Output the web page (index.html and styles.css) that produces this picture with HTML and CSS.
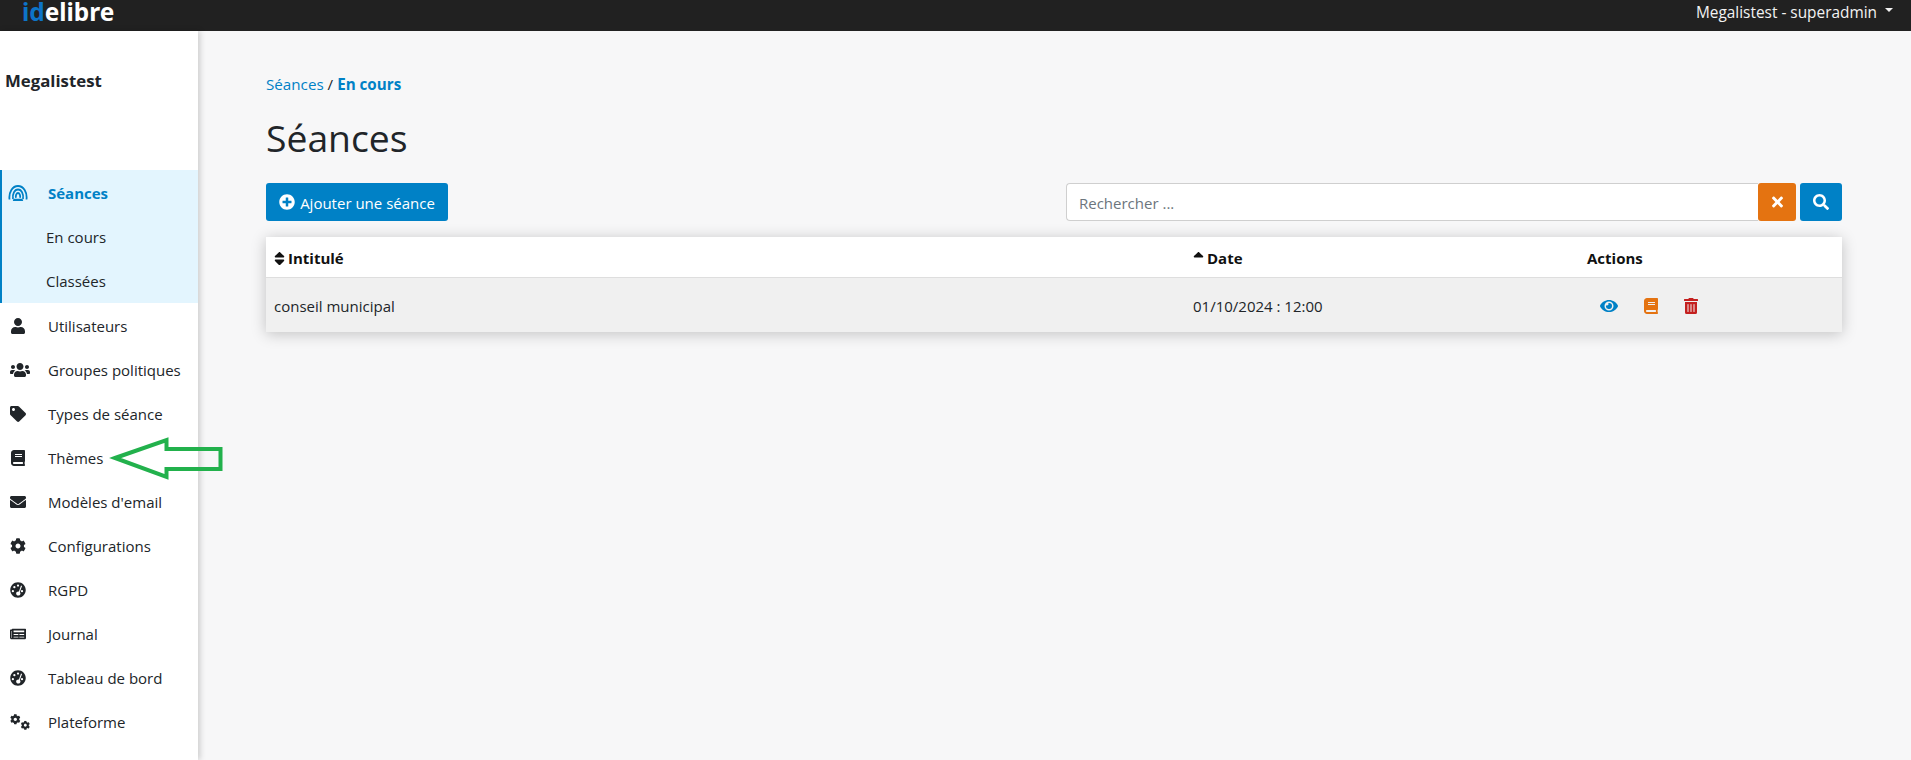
FILE: index.html
```html
<!DOCTYPE html>
<html lang="fr">
<head>
<meta charset="utf-8">
<title>Séances</title>
<link rel="stylesheet" href="styles.css">
</head>
<body>
<svg class="defs" width="0" height="0" aria-hidden="true">
  <symbol id="i-cog" viewBox="0 0 512 512"><path d="M487.4 315.7l-42.6-24.6c4.3-23.2 4.3-47 0-70.2l42.6-24.6c4.9-2.8 7.1-8.6 5.5-14-11.1-35.6-30-67.8-54.7-94.6-3.8-4.1-10-5.1-14.8-2.3L380.8 110c-17.9-15.4-38.5-27.3-60.8-35.1V25.8c0-5.6-3.9-10.5-9.4-11.7-36.7-8.2-74.3-7.8-109.2 0-5.5 1.2-9.4 6.1-9.4 11.7V75c-22.2 7.9-42.8 19.8-60.8 35.1L88.7 85.5c-4.9-2.8-11-1.9-14.8 2.3-24.7 26.7-43.6 58.9-54.7 94.6-1.7 5.4.6 11.2 5.5 14L67.3 221c-4.3 23.2-4.3 47 0 70.2l-42.6 24.6c-4.9 2.8-7.1 8.6-5.5 14 11.1 35.6 30 67.8 54.7 94.6 3.8 4.1 10 5.1 14.8 2.3l42.6-24.6c17.9 15.4 38.5 27.3 60.8 35.1v49.2c0 5.6 3.9 10.5 9.4 11.7 36.7 8.2 74.3 7.8 109.2 0 5.5-1.2 9.4-6.1 9.4-11.7v-49.2c22.2-7.9 42.8-19.8 60.8-35.1l42.6 24.6c4.9 2.8 11 1.9 14.8-2.3 24.7-26.7 43.6-58.9 54.7-94.6 1.5-5.5-.7-11.3-5.6-14.1zM256 336c-44.1 0-80-35.9-80-80s35.9-80 80-80 80 35.9 80 80-35.9 80-80 80z"/></symbol>
  <symbol id="i-gauge" viewBox="0 0 512 512"><path fill-rule="evenodd" d="M256 8C119 8 8 119 8 256s111 248 248 248 248-111 248-248S393 8 256 8zM256 76a36 36 0 1 1 0 72 36 36 0 0 1 0-72zM140 130a36 36 0 1 1 0 72 36 36 0 0 1 0-72zM92 256a36 36 0 1 1 0 72 36 36 0 0 1 0-72zM384 256a36 36 0 1 1 0 72 36 36 0 0 1 0-72zM352 112l34 12-72 196c14 12 22 28 22 46 0 36-32 66-70 66s-70-30-70-66 32-66 70-66c8 0 14 1 20 3z"/></symbol>
</svg>

<header class="topbar">
  <div class="logo"><span class="logo-id">id</span>elibre</div>
  <div class="user">Megalistest - superadmin<span class="caret"></span></div>
</header>

<div class="shell">
  <aside class="sidebar">
    <div class="structure">Megalistest</div>
    <nav class="menu">
      <div class="group">
        <a class="item item-active">
          <svg class="ico ico-podcast" viewBox="0 0 20 16"><g fill="none" stroke="currentColor" stroke-width="1.800"><path d="M1.500 14.500C.6 7 4.500 1 10 1s9.400 6 8.500 13.500"/><path d="M5 14C4.200 9 6.500 4.500 10 4.500s5.800 4.500 5 9.500"/><path d="M8 12.800C7.300 10.500 8.500 8 10 8s2.700 2.500 2 4.800"/></g><path d="M5.500 13.800h9l.7 2.200H4.800z" fill="currentColor"/></svg>
          <span>Séances</span>
        </a>
        <a class="item sub">En cours</a>
        <a class="item sub">Classées</a>
      </div>
      <a class="item"><svg class="ico" viewBox="0 0 448 512"><path d="M224 256c70.7 0 128-57.3 128-128S294.7 0 224 0 96 57.3 96 128s57.3 128 128 128zm89.6 32h-16.7c-22.2 10.2-46.9 16-72.9 16s-50.6-5.8-72.9-16h-16.7C60.2 288 0 348.2 0 422.4V464c0 26.5 21.5 48 48 48h352c26.5 0 48-21.5 48-48v-41.6c0-74.2-60.2-134.4-134.4-134.4z"/></svg><span>Utilisateurs</span></a>
      <a class="item"><svg class="ico ico-wide" viewBox="0 0 640 512"><path d="M96 224c35.3 0 64-28.7 64-64s-28.7-64-64-64-64 28.7-64 64 28.7 64 64 64zm448 0c35.3 0 64-28.7 64-64s-28.700-64-64-64-64 28.7-64 64 28.7 64 64 64zm32 32h-64c-17.6 0-33.5 7.1-45.1 18.6 40.3 22.1 68.9 62 75.1 109.4h66c17.7 0 32-14.3 32-32v-32c0-35.3-28.7-64-64-64zm-256 0c61.9 0 112-50.1 112-112S381.9 32 320 32 208 82.1 208 144s50.1 112 112 112zm76.8 32h-8.3c-20.8 10-43.9 16-68.5 16s-47.6-6-68.5-16h-8.3C179.600 288 128 339.6 128 403.2V432c0 26.5 21.5 48 48 48h288c26.5 0 48-21.5 48-48v-28.8c0-63.6-51.6-115.2-115.2-115.2zm-223.7-13.4C161.5 263.1 145.6 256 128 256H64c-35.3 0-64 28.7-64 64v32c0 17.7 14.3 32 32 32h65.9c6.3-47.4 34.9-87.3 75.2-109.4z"/></svg><span>Groupes politiques</span></a>
      <a class="item"><svg class="ico" viewBox="0 0 512 512"><path d="M0 252.118V48C0 21.49 21.49 0 48 0h204.118a48 48 0 0 1 33.941 14.059l211.882 211.882c18.745 18.745 18.745 49.137 0 67.882L293.823 497.941c-18.745 18.745-49.137 18.745-67.882 0L14.059 286.059A48 48 0 0 1 0 252.118zM112 64c-26.51 0-48 21.49-48 48s21.49 48 48 48 48-21.49 48-48-21.49-48-48-48z"/></svg><span>Types de séance</span></a>
      <a class="item"><svg class="ico" viewBox="0 0 448 512"><path d="M448 360V24c0-13.3-10.7-24-24-24H96C43 0 0 43 0 96v320c0 53 43 96 96 96h328c13.3 0 24-10.7 24-24v-16c0-7.5-3.5-14.3-8.9-18.7-4.2-15.4-4.2-59.3 0-74.7 5.4-4.3 8.9-11.1 8.9-18.6zM128 134c0-3.3 2.7-6 6-6h212c3.3 0 6 2.7 6 6v20c0 3.3-2.7 6-6 6H134c-3.3 0-6-2.7-6-6v-20zm0 64c0-3.3 2.7-6 6-6h212c3.3 0 6 2.7 6 6v20c0 3.3-2.7 6-6 6H134c-3.3 0-6-2.7-6-6v-20zm253.4 250H96c-17.7 0-32-14.3-32-32 0-17.6 14.4-32 32-32h285.4c-1.9 17.1-1.9 46.9 0 64z"/></svg><span>Thèmes</span></a>
      <a class="item"><svg class="ico" viewBox="0 0 512 512"><path d="M502.3 190.8c3.9-3.1 9.7-.2 9.7 4.7V400c0 26.5-21.5 48-48 48H48c-26.5 0-48-21.5-48-48V195.6c0-5 5.7-7.8 9.7-4.7 22.4 17.4 52.1 39.5 154.1 113.6 21.1 15.4 56.7 47.8 92.2 47.6 35.7.3 72-32.8 92.3-47.6 102-74.1 131.6-96.3 154-113.7zM256 320c23.2.4 56.6-29.2 73.4-41.4 132.7-96.3 142.8-104.7 173.4-128.7 5.8-4.5 9.2-11.5 9.2-18.9v-19c0-26.5-21.5-48-48-48H48C21.5 64 0 85.5 0 112v19c0 7.4 3.4 14.3 9.2 18.9 30.6 23.9 40.7 32.4 173.4 128.7 16.8 12.2 50.2 41.8 73.4 41.4z"/></svg><span>Modèles d'email</span></a>
      <a class="item"><svg class="ico"><use href="#i-cog"/></svg><span>Configurations</span></a>
      <a class="item"><svg class="ico"><use href="#i-gauge"/></svg><span>RGPD</span></a>
      <a class="item"><svg class="ico" viewBox="0 0 576 512"><path d="M552 64H88c-13.255 0-24 10.745-24 24v8H24c-13.255 0-24 10.745-24 24v272c0 30.928 25.072 56 56 56h472c26.51 0 48-21.49 48-48V88c0-13.255-10.745-24-24-24zM56 400a8 8 0 0 1-8-8V144h16v248a8 8 0 0 1-8 8zm236-16H140c-6.627 0-12-5.373-12-12v-8c0-6.627 5.373-12 12-12h152c6.627 0 12 5.373 12 12v8c0 6.627-5.373 12-12 12zm208 0H348c-6.627 0-12-5.373-12-12v-8c0-6.627 5.373-12 12-12h152c6.627 0 12 5.373 12 12v8c0 6.627-5.373 12-12 12zm-208-96H140c-6.627 0-12-5.373-12-12v-8c0-6.627 5.373-12 12-12h152c6.627 0 12 5.373 12 12v8c0 6.627-5.373 12-12 12zm208 0H348c-6.627 0-12-5.373-12-12v-8c0-6.627 5.373-12 12-12h152c6.627 0 12 5.373 12 12v8c0 6.627-5.373 12-12 12zm0-96H140c-6.627 0-12-5.373-12-12v-40c0-6.627 5.373-12 12-12h360c6.627 0 12 5.373 12 12v40c0 6.627-5.373 12-12 12z"/></svg><span>Journal</span></a>
      <a class="item"><svg class="ico"><use href="#i-gauge"/></svg><span>Tableau de bord</span></a>
      <a class="item"><svg class="ico ico-wide" viewBox="0 0 640 512"><use href="#i-cog" x="0" y="0" width="340" height="340"/><use href="#i-cog" x="340" y="212" width="300" height="300"/></svg><span>Plateforme</span></a>
    </nav>
    <svg class="arrow" viewBox="0 0 118 50"><path d="M7 25 58.500 7v9h54v20h-54v8z" fill="none" stroke="#22b14c" stroke-width="4"/></svg>
  </aside>

  <main class="content">
    <div class="crumbs"><a class="crumb-link">Séances</a> / <strong class="crumb-current">En cours</strong></div>
    <h1 class="title">Séances</h1>
    <div class="toolbar">
      <button class="btn btn-add"><svg class="btn-ico" viewBox="0 0 512 512"><path d="M256 8C119 8 8 119 8 256s111 248 248 248 248-111 248-248S393 8 256 8zm144 276c0 6.6-5.4 12-12 12h-92v92c0 6.6-5.4 12-12 12h-56c-6.6 0-12-5.400-12-12v-92h-92c-6.6 0-12-5.4-12-12v-56c0-6.6 5.4-12 12-12h92v-92c0-6.6 5.4-12 12-12h56c6.6 0 12 5.4 12 12v92h92c6.6 0 12 5.4 12 12v56z"/></svg><span class="btn-label">Ajouter une séance</span></button>
      <div class="search">
        <input class="search-input" type="text" placeholder="Rechercher ...">
        <button class="btn btn-clear" aria-label="Effacer"><svg class="x-ico" viewBox="0 0 352 512"><path d="M242.72 256l100.07-100.07c12.28-12.28 12.28-32.19 0-44.48l-22.24-22.24c-12.28-12.28-32.19-12.28-44.48 0L176 189.28 75.93 89.21c-12.28-12.28-32.19-12.28-44.48 0L9.21 111.45c-12.28 12.28-12.28 32.19 0 44.48L109.28 256 9.21 356.07c-12.28 12.28-12.28 32.19 0 44.48l22.24 22.24c12.28 12.28 32.2 12.28 44.48 0L176 322.72l100.07 100.07c12.28 12.28 32.2 12.28 44.48 0l22.24-22.24c12.28-12.28 12.28-32.19 0-44.48L242.72 256z"/></svg></button>
        <button class="btn btn-search" aria-label="Rechercher"><svg class="s-ico" viewBox="0 0 512 512"><path d="M505 442.7L405.3 343c-4.5-4.5-10.6-7-17-7H372c27.6-35.3 44-79.7 44-128C416 93.1 322.9 0 208 0S0 93.1 0 208s93.1 208 208 208c48.3 0 92.7-16.4 128-44v16.3c0 6.4 2.5 12.5 7 17l99.7 99.7c9.4 9.4 24.6 9.4 33.9 0l28.3-28.3c9.4-9.4 9.4-24.6.1-34zM208 336c-70.7 0-128-57.2-128-128 0-70.7 57.2-128 128-128 70.7 0 128 57.2 128 128 0 70.7-57.2 128-128 128z"/></svg></button>
      </div>
    </div>
    <div class="table">
      <div class="row head">
        <div class="c1"><svg class="sort" viewBox="0 0 320 512"><path d="M41 288h238c21.4 0 32.1 25.9 17 41L177 448c-9.4 9.4-24.6 9.4-33.9 0L24 329c-15.1-15.1-4.4-41 17-41zm255-105L177 64c-9.4-9.4-24.6-9.4-33.9 0L24 183c-15.1 15.1-4.4 41 17 41h238c21.4 0 32.1-25.9 17-41z"/></svg>Intitulé</div>
        <div class="c2"><svg class="sort sort-up" viewBox="0 0 320 512"><path d="M279 224H41c-21.4 0-32.1-25.9-17-41L143 64c9.4-9.4 24.6-9.4 33.9 0l119 119c15.2 15.1 4.5 41-16.9 41z"/></svg>Date</div>
        <div class="c3">Actions</div>
      </div>
      <div class="row body">
        <div class="c1">conseil municipal</div>
        <div class="c2">01/10/2024 : 12:00</div>
        <div class="c3 actions">
          <svg class="act act-eye" viewBox="0 0 576 512"><path d="M572.52 241.4C518.29 135.59 410.93 64 288 64S57.68 135.64 3.48 241.41a32.35 32.35 0 0 0 0 29.19C57.71 376.41 165.07 448 288 448s230.32-71.64 284.52-177.41a32.35 32.35 0 0 0 0-29.19zM288 400a144 144 0 1 1 144-144 143.93 143.93 0 0 1-144 144zm0-240a95.31 95.31 0 0 0-25.31 3.79 47.85 47.85 0 0 1-66.9 66.9A95.78 95.78 0 1 0 288 160z"/></svg>
          <svg class="act act-book" viewBox="0 0 448 512"><path d="M448 360V24c0-13.3-10.7-24-24-24H96C43 0 0 43 0 96v320c0 53 43 96 96 96h328c13.3 0 24-10.7 24-24v-16c0-7.5-3.5-14.3-8.9-18.7-4.2-15.4-4.2-59.3 0-74.7 5.4-4.3 8.9-11.1 8.9-18.6zM128 134c0-3.3 2.7-6 6-6h212c3.3 0 6 2.7 6 6v20c0 3.3-2.7 6-6 6H134c-3.3 0-6-2.7-6-6v-20zm0 64c0-3.3 2.7-6 6-6h212c3.3 0 6 2.7 6 6v20c0 3.3-2.7 6-6 6H134c-3.3 0-6-2.7-6-6v-20zm253.4 250H96c-17.7 0-32-14.3-32-32 0-17.6 14.4-32 32-32h285.4c-1.9 17.1-1.9 46.9 0 64z"/></svg>
          <svg class="act act-trash" viewBox="0 0 448 512"><path d="M32 464a48 48 0 0 0 48 48h288a48 48 0 0 0 48-48V128H32zm272-256a16 16 0 0 1 32 0v224a16 16 0 0 1-32 0zm-96 0a16 16 0 0 1 32 0v224a16 16 0 0 1-32 0zm-96 0a16 16 0 0 1 32 0v224a16 16 0 0 1-32 0zM432 32H312l-9.4-18.7A24 24 0 0 0 281.1 0H166.8a23.72 23.72 0 0 0-21.4 13.3L136 32H16A16 16 0 0 0 0 48v32a16 16 0 0 0 16 16h416a16 16 0 0 0 16-16V48a16 16 0 0 0-16-16z"/></svg>
        </div>
      </div>
    </div>
  </main>
</div>
</body>
</html>
```

FILE: styles.css
```css
* { box-sizing: border-box; }
html, body { margin: 0; height: 100%; }
body {
  font-family: "Open Sans", "Noto Sans", "Liberation Sans", sans-serif;
  font-size: 15px;
  color: #212529;
  background: #f7f7f8;
  overflow: hidden;
}
.defs { position: absolute; }
.topbar {
  height: 31px;
  background: #212121;
  display: flex;
  align-items: flex-start;
  justify-content: space-between;
  padding: 0 18px 0 22px;
  overflow: hidden;
}
.logo {
  font-family: "Noto Sans", sans-serif;
  font-weight: 700;
  font-size: 24.400px;
  line-height: 24px;
  color: #fff;
}
.logo-id { color: #0d74c8; }
.user { color: #f2f2f2; font-size: 15.400px; line-height: 25px; display: flex; align-items: center; }
.caret {
  width: 0; height: 0;
  margin-left: 8px; margin-bottom: 6px;
  border: 4px solid transparent;
  border-top-color: #f2f2f2;
  border-bottom: 0;
}
.shell { display: flex; height: 729px; }
.sidebar {
  position: relative;
  width: 198px;
  flex: none;
  background: #fff;
  box-shadow: 2px 0 6px rgba(0,0,0,.18);
  padding-top: 39px;
}
.structure { font-weight: 700; font-size: 16.800px; line-height: 22px; padding-left: 5px; margin-bottom: 78px; }
.menu { display: flex; flex-direction: column; padding-top: 1px; }
.group { background: #e3f5fe; border-left: 2px solid #0081c6; margin-top: -1px; padding-top: 1px; }
.item {
  display: flex;
  align-items: center;
  height: 44px;
  padding-left: 10px;
  color: #212529;
  font-size: 15px;
}
.group + .item { margin-top: 1px; }
.group .item { padding-left: 6px; }
.item > span { margin-left: 22px; }
.item-active { color: #0081c6; font-weight: 700; }
.item.sub { padding-left: 44px; }
.ico { width: 16px; height: 16px; flex: none; fill: currentColor; }
.ico-podcast { width: 20px; margin-right: -2px; }
.ico-wide { width: 20px; margin-right: -4px; }
.arrow { position: absolute; left: 108px; top: 402px; width: 118px; height: 50px; overflow: visible; }
.content { flex: 1; padding: 41px 69px 0 68px; }
.crumbs { font-size: 15.200px; line-height: 24px; }
.crumb-link { color: #0081c6; }
.crumb-current { color: #0081c6; }
.title { font-weight: 400; font-size: 37.300px; line-height: 50px; margin: 17px 0 20px; }
.toolbar { display: flex; justify-content: space-between; align-items: center; }
.btn { border: 0; border-radius: 3px; color: #fff; height: 38px; display: inline-flex; align-items: center; justify-content: center; font: inherit; padding: 0; }
.btn-add { width: 182px; background: #0081c6; font-size: 15px; }
.btn-label { padding-top: 2px; }
.btn-ico { width: 16px; height: 16px; fill: #fff; margin-right: 5px; }
.search { display: flex; width: 776px; }
.search-input {
  flex: 1;
  height: 38px;
  border: 1px solid #cfcfcf;
  border-radius: 4px 0 0 4px;
  border-right: 0;
  background: #fff;
  padding: 2px 12px 0;
  font: inherit;
  outline: none;
}
.search-input::placeholder { color: #6c757d; opacity: 1; }
.btn-clear { width: 38px; background: #e47311; }
.btn-search { width: 42px; background: #0081c6; margin-left: 4px; }
.x-ico { width: 11px; height: 16px; fill: #fff; }
.s-ico { width: 16px; height: 16px; fill: #fff; }
.table { margin-top: 16px; box-shadow: 0 2px 14px rgba(0,0,0,.22); background: #fff; }
.row { display: grid; grid-template-columns: 919px 394px 1fr; align-items: center; padding-left: 8px; }
.head { height: 41px; font-weight: 700; color: #111; border-bottom: 1px solid #dedede; font-size: 15px; padding-top: 2px; }
.body { height: 54px; background: #f0f0f0; font-size: 15px; padding-top: 2px; }
.sort { width: 11px; height: 17px; fill: #111; margin-right: 3px; vertical-align: -3px; }
.actions { display: flex; align-items: center; padding-left: 13px; }
.act { height: 16px; }
.act-eye { width: 18px; fill: #0081c6; }
.act-book { width: 14px; fill: #e47311; margin-left: 26px; }
.act-trash { width: 14px; fill: #c4201f; margin-left: 26px; }
```
